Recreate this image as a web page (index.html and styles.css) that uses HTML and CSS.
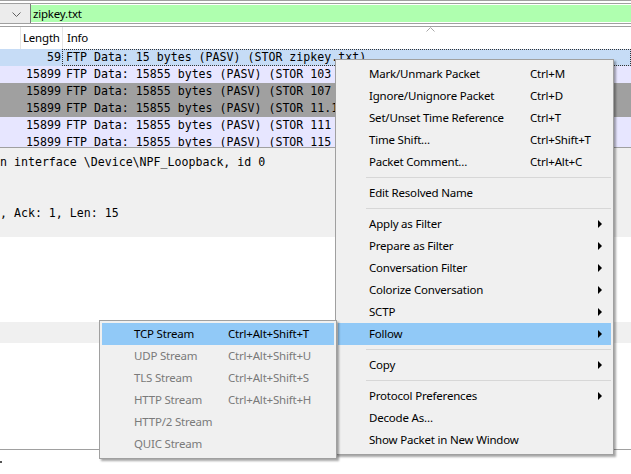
FILE: index.html
```html
<!DOCTYPE html>
<html>
<head>
<meta charset="utf-8">
<link rel="stylesheet" href="styles.css">
</head>
<body>
<div class="window">
  <div class="topline"></div>
  <div class="filterbar">
    <div class="dropdown">
      <svg width="9" height="6" viewBox="0 0 9 6"><path d="M0.5 0.5 L4.5 4.5 L8.5 0.5" fill="none" stroke="#606060" stroke-width="1"/></svg>
    </div>
    <div class="filter-input">zipkey.txt</div>
  </div>
  <div class="underbar"></div>
  <div class="list-header">
    <div class="hcol hcol-prev"></div>
    <div class="hcol hcol-len">Length</div>
    <div class="hcol hcol-info">Info
      <svg class="sort" width="9" height="5" viewBox="0 0 9 5"><path d="M0.5 4.5 L4.5 0.5 L8.5 4.5" fill="none" stroke="#a8a8a8" stroke-width="1"/></svg>
    </div>
  </div>
  <div class="packet-list">
    <div class="row row-sel"><span class="c-len">59</span><span class="c-info focus">FTP Data: 15 bytes (PASV) (STOR zipkey.txt)</span></div>
    <div class="row row-tcp"><span class="c-len">15899</span><span class="c-info">FTP Data: 15855 bytes (PASV) (STOR 103</span></div>
    <div class="row row-fin"><span class="c-len">15899</span><span class="c-info">FTP Data: 15855 bytes (PASV) (STOR 107</span></div>
    <div class="row row-fin"><span class="c-len">15899</span><span class="c-info">FTP Data: 15855 bytes (PASV) (STOR 11.1</span></div>
    <div class="row row-tcp"><span class="c-len">15899</span><span class="c-info">FTP Data: 15855 bytes (PASV) (STOR 111</span></div>
    <div class="row row-tcp"><span class="c-len">15899</span><span class="c-info">FTP Data: 15855 bytes (PASV) (STOR 115</span></div>
  </div>
  <div class="splitter"></div>
  <div class="details">
    <div class="dline">n interface \Device\NPF_Loopback, id 0</div>
    <div class="dline"></div>
    <div class="dline"></div>
    <div class="dline">, Ack: 1, Len: 15</div>
    <div class="dline dline-last"></div>
  </div>
  <div class="details-empty"></div>
  <div class="details-band"></div>
  <div class="details-rest"></div>
  <div class="bytes-pane"><span class="mark"></span></div>

  <div class="menu main-menu">
    <div class="item"><span class="label">Mark/Unmark Packet</span><span class="sc">Ctrl+M</span></div>
    <div class="item"><span class="label">Ignore/Unignore Packet</span><span class="sc">Ctrl+D</span></div>
    <div class="item"><span class="label">Set/Unset Time Reference</span><span class="sc">Ctrl+T</span></div>
    <div class="item"><span class="label">Time Shift…</span><span class="sc">Ctrl+Shift+T</span></div>
    <div class="item"><span class="label">Packet Comment…</span><span class="sc">Ctrl+Alt+C</span></div>
    <div class="sep"></div>
    <div class="item"><span class="label">Edit Resolved Name</span></div>
    <div class="sep"></div>
    <div class="item sub"><span class="label">Apply as Filter</span><span class="arrow"></span></div>
    <div class="item sub"><span class="label">Prepare as Filter</span><span class="arrow"></span></div>
    <div class="item sub"><span class="label">Conversation Filter</span><span class="arrow"></span></div>
    <div class="item sub"><span class="label">Colorize Conversation</span><span class="arrow"></span></div>
    <div class="item sub"><span class="label">SCTP</span><span class="arrow"></span></div>
    <div class="item sub hl"><span class="label">Follow</span><span class="arrow"></span></div>
    <div class="sep"></div>
    <div class="item sub"><span class="label">Copy</span><span class="arrow"></span></div>
    <div class="sep"></div>
    <div class="item sub"><span class="label">Protocol Preferences</span><span class="arrow"></span></div>
    <div class="item"><span class="label">Decode As…</span></div>
    <div class="item"><span class="label">Show Packet in New Window</span></div>
  </div>

  <div class="menu sub-menu">
    <div class="item hl"><span class="label">TCP Stream</span><span class="sc">Ctrl+Alt+Shift+T</span></div>
    <div class="item dis"><span class="label">UDP Stream</span><span class="sc">Ctrl+Alt+Shift+U</span></div>
    <div class="item dis"><span class="label">TLS Stream</span><span class="sc">Ctrl+Alt+Shift+S</span></div>
    <div class="item dis"><span class="label">HTTP Stream</span><span class="sc">Ctrl+Alt+Shift+H</span></div>
    <div class="item dis"><span class="label">HTTP/2 Stream</span></div>
    <div class="item dis"><span class="label">QUIC Stream</span></div>
  </div>
</div>
</body>
</html>
```

FILE: styles.css
```css
html, body {
  margin: 0;
  padding: 0;
  background: #ffffff;
}

body {
  font-family: "Noto Sans", "Open Sans", sans-serif;
  font-size: 11.5px;
  letter-spacing: -0.2px;
  color: #000;
}

.window {
  position: relative;
  width: 631px;
  height: 474px;
  overflow: hidden;
  display: flex;
  flex-direction: column;
  background: #fff;
}

.topline {
  height: 2px;
  border-top: 1px solid #a0a0a0;
  flex: none;
}

.filterbar {
  display: flex;
  border-top: 1px solid #a0a0a0;
  border-bottom: 1px solid #a0a0a0;
  flex: none;
  box-sizing: border-box;
  height: 21px;
}

.dropdown {
  width: 31px;
  background: #ececec;
  border-right: 1px solid #7a7a7a;
  display: flex;
  align-items: center;
  justify-content: flex-end;
  padding-right: 9px;
  padding-top: 2px;
  box-sizing: border-box;
  flex: none;
}

.filter-input {
  flex: 1;
  background: #afffaf;
  margin: 1px 0;
  padding-left: 2px;
  line-height: 17px;
}

.underbar {
  height: 2px;
  border-bottom: 1px solid #a0a0a0;
  flex: none;
}

.list-header {
  display: flex;
  height: 22px;
  flex: none;
  line-height: 22px;
}

.hcol {
  box-sizing: border-box;
  border-right: 1px solid #e5e5e5;
}

.hcol-prev {
  width: 21px;
}

.hcol-len {
  width: 42px;
  padding-left: 2px;
}

.hcol-info {
  flex: 1;
  padding-left: 4px;
  border-right: none;
  position: relative;
}

.sort {
  position: absolute;
  left: 363px;
  top: 0px;
}

.packet-list {
  flex: none;
  height: 98px;
  overflow: hidden;
  font-family: "DejaVu Sans Mono", "Liberation Mono", monospace;
  font-size: 11.6px;
  letter-spacing: 0;
}

.row {
  display: flex;
  height: 17px;
  line-height: 17px;
  white-space: pre;
}

.c-len {
  width: 62px;
  text-align: right;
  flex: none;
  padding-right: 1px;
  box-sizing: border-box;
}

.c-info {
  flex: 1;
  padding-left: 4px;
}

.focus {
  outline: 1px dotted #333;
  outline-offset: -1px;
}

.row-sel { background: #c6dcf6; }
.row-tcp { background: #e7e6ff; }
.row-fin { background: #a0a0a0; }

.splitter {
  flex: none;
  height: 6px;
  border-top: 1px solid #a0a0a0;
  background: #f0f0f0;
}

.details {
  flex: none;
  background: #f0f0f0;
  font-family: "DejaVu Sans Mono", "Liberation Mono", monospace;
  font-size: 11.6px;
  letter-spacing: 0;
}

.dline {
  height: 17px;
  line-height: 17px;
  white-space: pre;
}

.dline-last {
  height: 15px;
}

.details-empty {
  flex: none;
  height: 85px;
}

.details-band {
  flex: none;
  height: 21px;
  background: #f0f0f0;
}

.details-rest {
  flex: none;
  height: 106px;
  border-bottom: 1px solid #a0a0a0;
}

.bytes-pane {
  flex: 1;
  position: relative;
}

.mark {
  position: absolute;
  left: 0;
  top: 11px;
  width: 2px;
  height: 2px;
  background: #555;
}

/* Menus */
.menu {
  position: absolute;
  background: #f0f0f0;
  border: 1px solid #a0a0a0;
  box-shadow: 2px 2px 2px rgba(0, 0, 0, 0.35);
  box-sizing: border-box;
  padding: 3px 2px;
  white-space: nowrap;
}

.main-menu {
  left: 335px;
  top: 59px;
  width: 279px;
}

.sub-menu {
  left: 99px;
  top: 320px;
  width: 238px;
  padding: 2px 2px 3px 2px;
}

.item {
  display: flex;
  align-items: center;
  height: 22px;
  padding-bottom: 2px;
  box-sizing: border-box;
  position: relative;
}

.main-menu .label {
  width: 161px;
  padding-left: 31px;
  flex: none;
}

.sub-menu .label {
  width: 94px;
  padding-left: 32px;
  flex: none;
}

.hl {
  background: #91c9f7;
}

.dis {
  color: #7a7a7a;
}

.arrow {
  position: absolute;
  left: 260px;
  top: 7px;
  width: 0;
  height: 0;
  border-left: 4px solid #000;
  border-top: 4px solid transparent;
  border-bottom: 4px solid transparent;
}

.sep {
  height: 1px;
  background: #d7d7d7;
  margin: 4px 0 4px 28px;
}
```
